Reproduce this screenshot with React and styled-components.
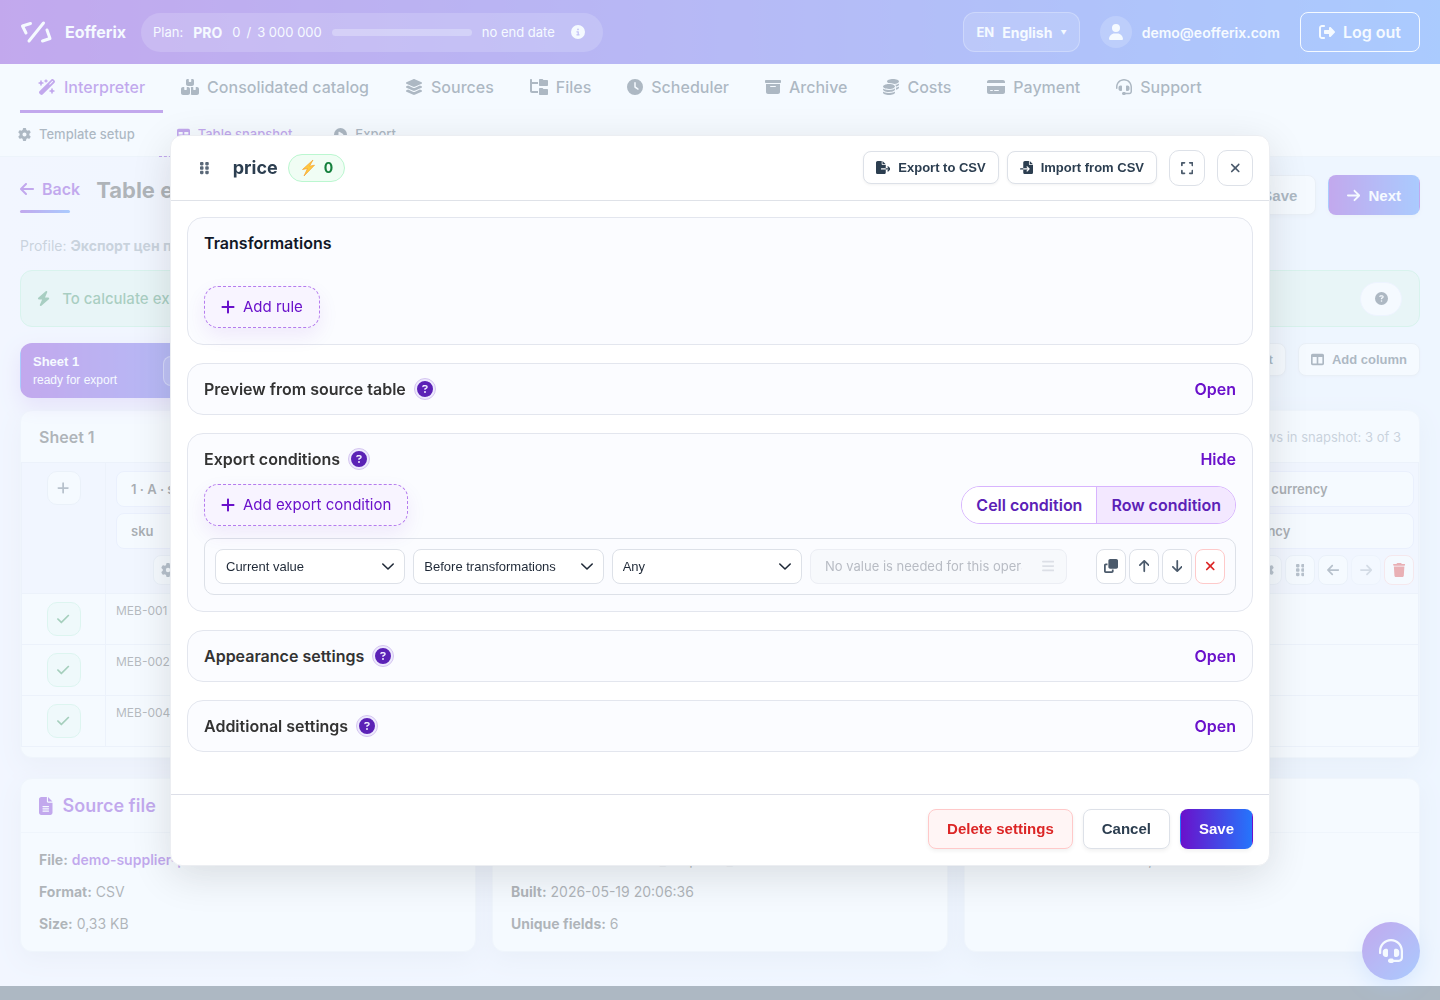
import React from 'react';
import styled, { createGlobalStyle, css } from 'styled-components';
import {
  FaArrowDown,
  FaArrowLeft,
  FaArrowRight,
  FaArrowUp,
  FaBars,
  FaBolt,
  FaBoxArchive,
  FaBoxesStacked,
  FaCheck,
  FaCircleInfo,
  FaCirclePlay,
  FaCircleQuestion,
  FaClock,
  FaClone,
  FaCoins,
  FaCreditCard,
  FaExpand,
  FaFileExport,
  FaFileImport,
  FaFileLines,
  FaFolderTree,
  FaGear,
  FaGripVertical,
  FaHeadset,
  FaLayerGroup,
  FaPlus,
  FaRightFromBracket,
  FaTable,
  FaTableColumns,
  FaTrash,
  FaUser,
  FaWandMagicSparkles,
  FaXmark
} from 'react-icons/fa6';

// the icon set draws every glyph in a 1em square, give each its real width
const GlobalStyle = createGlobalStyle`
  * {
    box-sizing: border-box;
  }
  body {
    margin: 0;
    overflow: hidden;
    font-family: Inter, "Liberation Sans", sans-serif;
    font-size: 16px;
    color: #333;
  }
  button, input, select {
    font-family: inherit;
    margin: 0;
  }
  button {
    cursor: pointer;
  }
  a {
    text-decoration: none;
    color: inherit;
  }
  h1, h2, h3, p {
    margin: 0;
  }
  svg {
    height: 1em;
    flex: none;
  }
  svg[viewBox="0 0 320 512"] {
    width: 0.625em;
  }
  svg[viewBox="0 0 384 512"] {
    width: 0.75em;
  }
  svg[viewBox="0 0 448 512"] {
    width: 0.875em;
  }
  svg[viewBox="0 0 576 512"] {
    width: 1.125em;
  }
`
const gradient = 'linear-gradient(to right, #6a11cb, #2575fc)'
const controlFont = '"Liberation Sans", Arial, sans-serif'

const Page = styled.div`
  height: 100vh;
  overflow: hidden;
  background: linear-gradient(to right, #f5f3ff, #eaf2ff);
`
const Header = styled.header`
  display: flex;
  align-items: center;
  height: 64px;
  padding: 0 20px;
  color: #fff;
  background: ${gradient};
`
const Brand = styled.a`
  display: flex;
  align-items: center;
  gap: 12px;
  font-weight: 700;
  font-size: 16px;

  svg {
    width: 33px;
    height: 24px;
  }
`
const Plan = styled.div`
  display: flex;
  align-items: center;
  gap: 10px;
  height: 39px;
  margin-left: 15px;
  padding: 0 18px 0 12px;
  border-radius: 20px;
  font-size: 13px;
  background: rgba(255, 255, 255, 0.18);

  b {
    font-size: 14px;
  }
  svg {
    margin-left: 6px;
    font-size: 14px;
  }
`
const Usage = styled.div`
  display: flex;
  gap: 6px;
`
const Meter = styled.div`
  width: 140px;
  height: 7px;
  border-radius: 4px;
  background: rgba(255, 255, 255, 0.3);
`
const Account = styled.div`
  display: flex;
  align-items: center;
  margin-left: auto;
  font-weight: 600;
`
const Language = styled.button`
  display: flex;
  align-items: center;
  gap: 8px;
  height: 40px;
  padding: 0 12px;
  border: 1px solid rgba(255, 255, 255, 0.3);
  border-radius: 12px;
  color: #fff;
  background: rgba(255, 255, 255, 0.15);
  font-size: 14px;
  font-weight: 700;

  small {
    font-size: 13px;
  }
  i {
    font-style: normal;
    font-size: 6px;
  }
`
const Avatar = styled.span`
  display: flex;
  align-items: center;
  justify-content: center;
  width: 32px;
  height: 32px;
  margin: 0 10px 0 20px;
  border-radius: 50%;
  background: rgba(255, 255, 255, 0.2);
`
const Email = styled.span`
  font-size: 14px;
`
const LogOut = styled.button`
  display: flex;
  align-items: center;
  gap: 8px;
  height: 40px;
  margin-left: 20px;
  padding: 0 18px;
  border: 1px solid #fff;
  border-radius: 8px;
  color: #fff;
  background: transparent;
  font-size: 16px;
  font-weight: 600;
`
const Nav = styled.nav`
  display: flex;
  height: 49px;
  padding: 0 20px;
  background: #fff;
`
const NavItem = styled.a`
  display: flex;
  align-items: center;
  gap: 8px;
  padding: 0 18px;
  font-weight: 500;
  color: ${props => props.$active ? '#6a11cb' : '#2c3e50'};
  border-bottom: 3px solid ${props => props.$active ? '#6a11cb' : 'transparent'};
`
const SubNav = styled.nav`
  display: flex;
  gap: 6px;
  height: 44px;
  border-bottom: 1px solid #e8ecf3;
  background: #fefeff;
`
const SubItem = styled.a`
  display: flex;
  align-items: center;
  gap: 8px;
  margin-bottom: -1px;
  padding: 0 18px 1px;
  font-size: 13px;
  font-weight: 500;
  color: ${props => props.$active ? '#6a11cb' : '#2c3e50'};
  border-bottom: 1px dashed ${props => props.$active ? '#6a11cb' : 'transparent'};
`
const Main = styled.main`
  padding: 18px 20px 34px;
`
const TitleRow = styled.div`
  display: flex;
  height: 54px;
`
const Back = styled.a`
  display: flex;
  align-items: center;
  gap: 8px;
  height: 28px;
  font-weight: 600;
  color: #6a11cb;
`
const BackWrap = styled.div`
  &::after {
    content: '';
    display: block;
    width: 50px;
    height: 3px;
    margin-top: 7px;
    border-radius: 2px;
    background: ${gradient};
  }
`
const Title = styled.h1`
  margin-left: 16px;
  font-size: 22px;
  line-height: 30px;
  font-weight: 700;
`
const Button = styled.button`
  display: flex;
  align-items: center;
  gap: 8px;
  height: 40px;
  padding: 0 18px;
  border: 1px solid #dde1e8;
  border-radius: 8px;
  color: #2c3e50;
  background: #fff;
  font-family: ${controlFont};
  font-size: 15px;
  font-weight: 700;
  white-space: nowrap;
  box-shadow: 0 2px 4px rgba(0, 0, 0, 0.06);

  ${props => props.$small && css`
    height: 33px;
    padding: 0 12px;
    font-size: 13px;
    box-shadow: 0 1px 3px rgba(0, 0, 0, 0.05);
  `}
  ${props => props.$primary && css`
    border-color: transparent;
    color: #fff;
    background: ${gradient};
  `}
  ${props => props.$danger && css`
    border-color: #ffc9c9;
    color: #dc2626;
    background: #fff5f5;
  `}
`
const Actions = styled.div`
  display: flex;
  gap: 12px;
  margin-left: auto;
`
const Profile = styled.p`
  height: 41px;
  font-size: 14px;
  line-height: 34px;
  color: #7f8c9b;
`
const Notice = styled.div`
  display: flex;
  align-items: center;
  justify-content: space-between;
  height: 57px;
  padding: 0 17px 0 16px;
  border: 1px solid #a9e9ca;
  border-radius: 12px;
  color: #1e7e4c;
  background: #d9f0e6;
  font-size: 15px;
  font-weight: 500;

  p {
    display: flex;
    align-items: center;
    gap: 12px;
  }
`
const NoticeHelp = styled.button`
  display: flex;
  align-items: center;
  justify-content: center;
  width: 42px;
  height: 34px;
  border: 1px solid #e8ecff;
  border-radius: 17px;
  color: #2c3e50;
  background: #fff;
  font-size: 13px;
`
const SheetBar = styled.div`
  display: flex;
  height: 55px;
  margin: 16px 0 12px;
`
const SheetTab = styled.div`
  display: flex;
  align-items: center;
  gap: 46px;
  width: 300px;
  padding: 0 12px;
  border: 1px solid transparent;
  border-radius: 12px;
  color: #fff;
  background: ${gradient};
  font-family: ${controlFont};
  font-size: 12px;
  line-height: 19px;
  box-shadow: 0 8px 20px rgba(106, 17, 203, 0.25);

  b {
    display: block;
    font-size: 13px;
  }
`
const TabTool = styled.button`
  width: 30px;
  height: 30px;
  border: 1px solid rgba(255, 255, 255, 0.4);
  border-radius: 8px;
  background: rgba(255, 255, 255, 0.15);
`
const Card = styled.section`
  border: 1px solid #eef1f6;
  border-radius: 12px;
  background: #fff;
  box-shadow: 0 8px 24px rgba(44, 62, 80, 0.1);
`
const SheetCard = styled(Card)`
  padding-bottom: 10px;
`
const SheetHead = styled.header`
  display: flex;
  align-items: center;
  justify-content: space-between;
  height: 51px;
  padding: 0 18px;

  h2 {
    font-size: 16px;
    font-weight: 600;
  }
  span {
    font-size: 13px;
    color: #7f8c9b;
  }
`
const SheetTable = styled.table`
  width: 100%;
  height: 285px;
  border-collapse: collapse;
  table-layout: fixed;

  th, td {
    height: 51px;
    padding: 9px 10px;
    border: 1px solid #e3e8f3;
    font-size: 12px;
    font-weight: 400;
    text-align: left;
    vertical-align: top;
    color: #444;
  }
  th {
    height: 131px;
    padding: 8px 4px 8px 10px;
    background: #f2f3ff;
  }
  th:nth-child(2) {
    width: 214px;
  }
  th:last-child {
    width: 210px;
  }
  th:first-child, td:first-child {
    width: 84px;
    padding: 8px 0;
    text-align: center;
  }
`
const CellButton = styled.button`
  display: inline-flex;
  align-items: center;
  justify-content: center;
  vertical-align: top;
  width: 34px;
  height: 34px;
  padding: 0;
  border: 1px solid ${props => props.$on ? '#b9f0d3' : '#dfe4ee'};
  border-radius: 10px;
  color: ${props => props.$on ? '#15803d' : '#4b5a6b'};
  background: ${props => props.$on ? '#ecfbf4' : '#fff'};
  font-size: 14px;
`
const ColumnName = styled.div`
  height: 36px;
  margin-bottom: 6px;
  padding: 0 14px;
  border: 1px solid #dfe0fa;
  border-radius: 8px;
  background: #fff;
  font-size: 13px;
  font-weight: 600;
  line-height: 34px;
  color: #222;
`
const ColumnTools = styled.div`
  display: flex;
  justify-content: flex-end;
  gap: 3px;
`
const ColumnTool = styled.button`
  display: flex;
  align-items: center;
  justify-content: center;
  width: 30px;
  height: 30px;
  padding: 0;
  border: 1px solid ${props => props.$danger ? '#fecaca' : '#dfe4ee'};
  border-radius: 8px;
  color: ${props => props.$danger ? '#dc2626' : '#4b5a6b'};
  background: #fff;
  font-size: 14px;
  opacity: ${props => props.$faded ? 0.5 : 1};
`
const InfoGrid = styled.div`
  display: grid;
  grid-template-columns: repeat(3, 1fr);
  gap: 16px;
  margin-top: 20px;
`
const InfoCard = styled(Card)`
  height: 174px;

  h2 {
    display: flex;
    align-items: center;
    gap: 10px;
    height: 54px;
    padding: 0 18px;
    border-bottom: 1px solid #eceff5;
    font-size: 18px;
    font-weight: 600;
    color: #6a11cb;
  }
  p {
    padding: 0 18px;
    font-size: 14px;
    line-height: 32px;
  }
  p:first-of-type {
    margin-top: 11px;
  }
  a {
    font-weight: 600;
    color: #6a11cb;
  }
`
const Footer = styled.footer`
  height: 60px;
  background: #2c3e50;
`
const Fab = styled.button`
  position: fixed;
  right: 20px;
  bottom: 20px;
  display: flex;
  align-items: center;
  justify-content: center;
  width: 58px;
  height: 58px;
  border: 0;
  border-radius: 50%;
  color: #fff;
  background: linear-gradient(135deg, #6a11cb, #2575fc);
  font-size: 24px;
  box-shadow: 0 8px 20px rgba(37, 117, 252, 0.3);
`
const Overlay = styled.div`
  position: fixed;
  inset: 0;
  display: flex;
  align-items: center;
  justify-content: center;
  background: rgba(240, 248, 255, 0.66);
`
const Modal = styled.div`
  display: flex;
  flex-direction: column;
  width: calc(100% - 40px);
  max-width: 1100px;
  border: 1px solid #eceef2;
  border-radius: 12px;
  background: #fff;
  box-shadow: 0 10px 40px rgba(0, 0, 0, 0.12);
`
const ModalHead = styled.header`
  display: flex;
  align-items: center;
  height: 65px;
  padding: 0 16px 0 29px;
  border-bottom: 1px solid #dfe2e8;

  > svg {
    font-size: 14px;
    color: #5a6878;
  }
  h2 {
    margin: 0 10px 0 24px;
    font-size: 18px;
    font-weight: 700;
    color: #2c3e50;
  }
`
const Rate = styled.span`
  display: flex;
  align-items: center;
  gap: 8px;
  height: 28px;
  padding: 0 11px;
  border: 1px solid #bbf7d0;
  border-radius: 14px;
  color: #15803d;
  background: #f0fdf4;
  font-size: 14px;
  font-weight: 700;

  svg {
    width: 16px;
    height: 18px;
  }
`
const HeadTools = styled.div`
  display: flex;
  align-items: center;
  gap: 8px;
  margin-left: auto;
`
const SquareButton = styled.button`
  display: flex;
  align-items: center;
  justify-content: center;
  width: 36px;
  height: 36px;
  margin-left: 4px;
  padding: 0;
  border: 1px solid #dde1e8;
  border-radius: 10px;
  color: #4b5a6b;
  background: #fff;
  font-size: 14px;
`
const ModalBody = styled.div`
  display: flex;
  flex-direction: column;
  gap: 18px;
  padding: 16px 16px 42px;
`
const Panel = styled.section`
  padding: 0 16px;
  border: 1px solid #e3e6ee;
  border-radius: 16px;
  background: #fbfcff;
`
const PanelHead = styled.div`
  display: flex;
  align-items: center;
  gap: 8px;
  height: 50px;

  h3 {
    font-size: 16px;
    font-weight: 600;
    color: ${props => props.$dark ? '#111827' : '#333'};
  }
`
const Help = styled.button`
  display: flex;
  align-items: center;
  justify-content: center;
  width: 22px;
  height: 22px;
  padding: 0;
  border: 1px solid #d5c6f0;
  border-radius: 50%;
  color: #5b21b6;
  background: #ede9fe;
  font-size: 16px;
`
const Toggle = styled.button`
  margin-left: auto;
  padding: 0;
  border: 0;
  color: #6a11cb;
  background: none;
  font-size: 16px;
  font-weight: 600;
`
const AddButton = styled.button`
  display: flex;
  align-items: center;
  gap: 8px;
  height: 42px;
  padding: 0 16px;
  border: 1px dashed #b57bee;
  border-radius: 14px;
  color: #6a11cb;
  background: #f8f4ff;
  font-size: 15px;
  box-shadow: 0 8px 20px rgba(106, 17, 203, 0.08);

  svg {
    font-size: 16px;
  }
`
const RuleArea = styled.div`
  padding: 18px 0 16px;
`
const ConditionBar = styled.div`
  display: flex;
  align-items: center;
  justify-content: space-between;
  margin-bottom: 12px;
`
const Segments = styled.div`
  display: flex;
  height: 38px;
  border: 1px solid #d8b4fe;
  border-radius: 19px;
  overflow: hidden;
`
const Segment = styled.button`
  padding: 0 14px;
  border: 0;
  color: #5b21b6;
  background: ${props => props.$active ? '#f3e8ff' : '#fff'};
  font-size: 16px;
  font-weight: 600;

  & + & {
    border-left: 1px solid #d8b4fe;
  }
`
const Condition = styled.div`
  display: grid;
  grid-template-columns: 1fr 1fr 1fr 1.35fr 150px;
  gap: 8px;
  margin-bottom: 16px;
  padding: 10px;
  border: 1px solid #dde1e8;
  border-radius: 10px;
`
const SelectBox = styled.div`
  display: grid;
  align-items: center;

  select, svg {
    grid-area: 1 / 1;
  }
  svg {
    justify-self: end;
    width: 14px;
    height: 14px;
    margin-right: 10px;
    pointer-events: none;
  }
`
const Select = styled.select`
  appearance: none;
  width: 100%;
  height: 35px;
  padding: 0 28px 0 10px;
  border: 1px solid #dde1e8;
  border-radius: 8px;
  color: #1f2937;
  background: #fff;
  font-family: ${controlFont};
  font-size: 13px;
`
const ValueBox = styled.div`
  display: flex;
  align-items: center;
  min-width: 0;
  height: 35px;
  padding: 0 12px 0 14px;
  border: 1px solid #eceef4;
  border-radius: 8px;
  color: #dcdfe6;
  background: #f7f9fc;
  font-size: 14px;

  input {
    flex: 1;
    min-width: 0;
    margin-right: 20px;
    padding: 0;
    border: 0;
    background: none;
    font-size: 13px;
  }
  input::placeholder {
    color: #b8bcc4;
  }
`
const RowTools = styled.div`
  display: flex;
  justify-content: flex-end;
  gap: 3px;
`
const RowTool = styled(ColumnTool)`
  height: 35px;
  border-color: ${props => props.$danger ? '#fecaca' : '#dde1e8'};
`
const ModalFoot = styled.footer`
  display: flex;
  justify-content: flex-end;
  gap: 10px;
  padding: 14px 16px 16px;
  border-top: 1px solid #dddfe8;
`

const nav = [
  { label: 'Interpreter', icon: FaWandMagicSparkles, active: true },
  { label: 'Consolidated catalog', icon: FaBoxesStacked },
  { label: 'Sources', icon: FaLayerGroup },
  { label: 'Files', icon: FaFolderTree },
  { label: 'Scheduler', icon: FaClock },
  { label: 'Archive', icon: FaBoxArchive },
  { label: 'Costs', icon: FaCoins },
  { label: 'Payment', icon: FaCreditCard },
  { label: 'Support', icon: FaHeadset }
]

const subNav = [
  { label: 'Template setup', icon: FaGear },
  { label: 'Table snapshot', icon: FaTable, active: true },
  { label: 'Export', icon: FaCirclePlay }
]

const columns = [
  { top: '1 · A · sku', name: 'sku' },
  { top: '2 · B · name', name: 'name' },
  { top: '3 · C · brand', name: 'brand' },
  { top: '4 · D · stock', name: 'stock' },
  { top: '5 · E · price', name: 'price' },
  { top: '6 · F · currency', name: 'currency' }
]

const skus = ['MEB-001', 'MEB-002', 'MEB-004']

const Logo = () => (
  <svg viewBox="0 0 33 24" fill="none" stroke="#fff" strokeWidth="3" strokeLinecap="round" strokeLinejoin="round">
    <path d="M10.500 3.500L2.500 6L6 13M23.500 3L9 21M27 10L30 18.500L22.500 21" />
  </svg>
)

const Chevron = () => (
  <svg viewBox="0 0 14 14" fill="none" stroke="#1f2937" strokeWidth="1.6" strokeLinecap="round" strokeLinejoin="round">
    <path d="M1.800 5L7 10L12.200 5" />
  </svg>
)

const Lightning = () => (
  <svg viewBox="0 0 16 18">
    <path d="M13 1L2.500 10.500L7.500 9.500L4 17L14.500 6.200L9.500 7.200Z" fill="#ffc93c" stroke="#f5a130" strokeWidth="0.7" strokeLinejoin="round" />
  </svg>
)

const Choice = ({ label, value }) => (
  <SelectBox>
    <Select aria-label={label} defaultValue={value}>
      <option>{value}</option>
    </Select>
    <Chevron />
  </SelectBox>
)

const PanelTitle = ({ title, toggle }) => (
  <PanelHead>
    <h3>{title}</h3>
    <Help aria-label={`About ${title}`}><FaCircleQuestion /></Help>
    <Toggle>{toggle}</Toggle>
  </PanelHead>
)

const ColumnHead = ({ top, name }) => (
  <th>
    <ColumnName>{top}</ColumnName>
    <ColumnName>{name}</ColumnName>
    <ColumnTools>
      <ColumnTool aria-label="Column settings"><FaGear /></ColumnTool>
      <ColumnTool aria-label="Move column"><FaGripVertical /></ColumnTool>
      <ColumnTool aria-label="Move left"><FaArrowLeft /></ColumnTool>
      <ColumnTool aria-label="Move right" $faded><FaArrowRight /></ColumnTool>
      <ColumnTool aria-label="Delete column" $danger><FaTrash /></ColumnTool>
    </ColumnTools>
  </th>
)

const PageHeader = () => (
  <Header>
    <Brand href="#"><Logo />Eofferix</Brand>
    <Plan>
      <span>Plan:</span>
      <b>PRO</b>
      <Usage>
        <span>0</span>
        <span>/</span>
        <span>3 000 000</span>
      </Usage>
      <Meter />
      <span>no end date</span>
      <FaCircleInfo />
    </Plan>
    <Account>
      <Language><small>EN</small>English<i>▼</i></Language>
      <Avatar><FaUser /></Avatar>
      <Email>demo@eofferix.com</Email>
      <LogOut><FaRightFromBracket />Log out</LogOut>
    </Account>
  </Header>
)

const SettingsModal = () => (
  <Overlay>
    <Modal role="dialog" aria-label="price">
      <ModalHead>
        <FaGripVertical />
        <h2>price</h2>
        <Rate><Lightning />0</Rate>
        <HeadTools>
          <Button $small><FaFileExport />Export to CSV</Button>
          <Button $small><FaFileImport />Import from CSV</Button>
          <SquareButton aria-label="Full screen"><FaExpand /></SquareButton>
          <SquareButton aria-label="Close"><FaXmark /></SquareButton>
        </HeadTools>
      </ModalHead>
      <ModalBody>
        <Panel>
          <PanelHead $dark><h3>Transformations</h3></PanelHead>
          <RuleArea>
            <AddButton><FaPlus />Add rule</AddButton>
          </RuleArea>
        </Panel>
        <Panel>
          <PanelTitle title="Preview from source table" toggle="Open" />
        </Panel>
        <Panel>
          <PanelTitle title="Export conditions" toggle="Hide" />
          <ConditionBar>
            <AddButton><FaPlus />Add export condition</AddButton>
            <Segments>
              <Segment>Cell condition</Segment>
              <Segment $active>Row condition</Segment>
            </Segments>
          </ConditionBar>
          <Condition>
            <Choice label="Value" value="Current value" />
            <Choice label="Stage" value="Before transformations" />
            <Choice label="Operation" value="Any" />
            <ValueBox>
              <input aria-label="Compare with" placeholder="No value is needed for this operation" disabled />
              <FaBars />
            </ValueBox>
            <RowTools>
              <RowTool aria-label="Duplicate"><FaClone /></RowTool>
              <RowTool aria-label="Move up"><FaArrowUp /></RowTool>
              <RowTool aria-label="Move down"><FaArrowDown /></RowTool>
              <RowTool aria-label="Remove" $danger><FaXmark /></RowTool>
            </RowTools>
          </Condition>
        </Panel>
        <Panel>
          <PanelTitle title="Appearance settings" toggle="Open" />
        </Panel>
        <Panel>
          <PanelTitle title="Additional settings" toggle="Open" />
        </Panel>
      </ModalBody>
      <ModalFoot>
        <Button $danger>Delete settings</Button>
        <Button>Cancel</Button>
        <Button $primary>Save</Button>
      </ModalFoot>
    </Modal>
  </Overlay>
)

const App = () => (
  <>
    <GlobalStyle />
    <Page>
      <PageHeader />
      <Nav>
        {nav.map(({ label, icon: Icon, active }) => (
          <NavItem key={label} href="#" $active={active}><Icon />{label}</NavItem>
        ))}
      </Nav>
      <SubNav>
        {subNav.map(({ label, icon: Icon, active }) => (
          <SubItem key={label} href="#" $active={active}><Icon />{label}</SubItem>
        ))}
      </SubNav>
      <Main>
        <TitleRow>
          <BackWrap><Back href="#"><FaArrowLeft />Back</Back></BackWrap>
          <Title>Table export</Title>
          <Actions>
            <Button>Save</Button>
            <Button $primary><FaArrowRight />Next</Button>
          </Actions>
        </TitleRow>
        <Profile>Profile: <b>Экспорт цен п</b></Profile>
        <Notice>
          <p><FaBolt />To calculate export</p>
          <NoticeHelp aria-label="Help"><FaCircleQuestion /></NoticeHelp>
        </Notice>
        <SheetBar>
          <SheetTab>
            <div><b>Sheet 1</b>ready for export</div>
            <TabTool aria-label="Sheet settings" />
          </SheetTab>
          <Actions>
            <Button $small>Add sheet</Button>
            <Button $small><FaTableColumns />Add column</Button>
          </Actions>
        </SheetBar>
        <SheetCard>
          <SheetHead>
            <h2>Sheet 1</h2>
            <span>Rows in snapshot: 3 of 3</span>
          </SheetHead>
          <SheetTable>
            <thead>
              <tr>
                <th><CellButton aria-label="Add row"><FaPlus /></CellButton></th>
                {columns.map(({ top, name }) => (
                  <ColumnHead key={name} top={top} name={name} />
                ))}
              </tr>
            </thead>
            <tbody>
              {skus.map(sku => (
                <tr key={sku}>
                  <td><CellButton aria-label={`Include ${sku}`} $on><FaCheck /></CellButton></td>
                  <td>{sku}</td>
                  <td colSpan={5} />
                </tr>
              ))}
            </tbody>
          </SheetTable>
        </SheetCard>
        <InfoGrid>
          <InfoCard>
            <h2><FaFileLines />Source file</h2>
            <p><b>File:</b> <a href="#">demo-supplier-price</a></p>
            <p><b>Format:</b> CSV</p>
            <p><b>Size:</b> 0,33 KB</p>
          </InfoCard>
          <InfoCard>
            <h2>Snapshot</h2>
            <p><b>Database table:</b> demo_snapshot_1</p>
            <p><b>Built:</b> 2026-05-19 20:06:36</p>
            <p><b>Unique fields:</b> 6</p>
          </InfoCard>
          <InfoCard>
            <h2>Export</h2>
            <p><b>Current status:</b> available, 3 rows</p>
          </InfoCard>
        </InfoGrid>
      </Main>
      <Footer />
      <Fab aria-label="Support chat"><FaHeadset /></Fab>
    </Page>
    <SettingsModal />
  </>
)

export default App;
